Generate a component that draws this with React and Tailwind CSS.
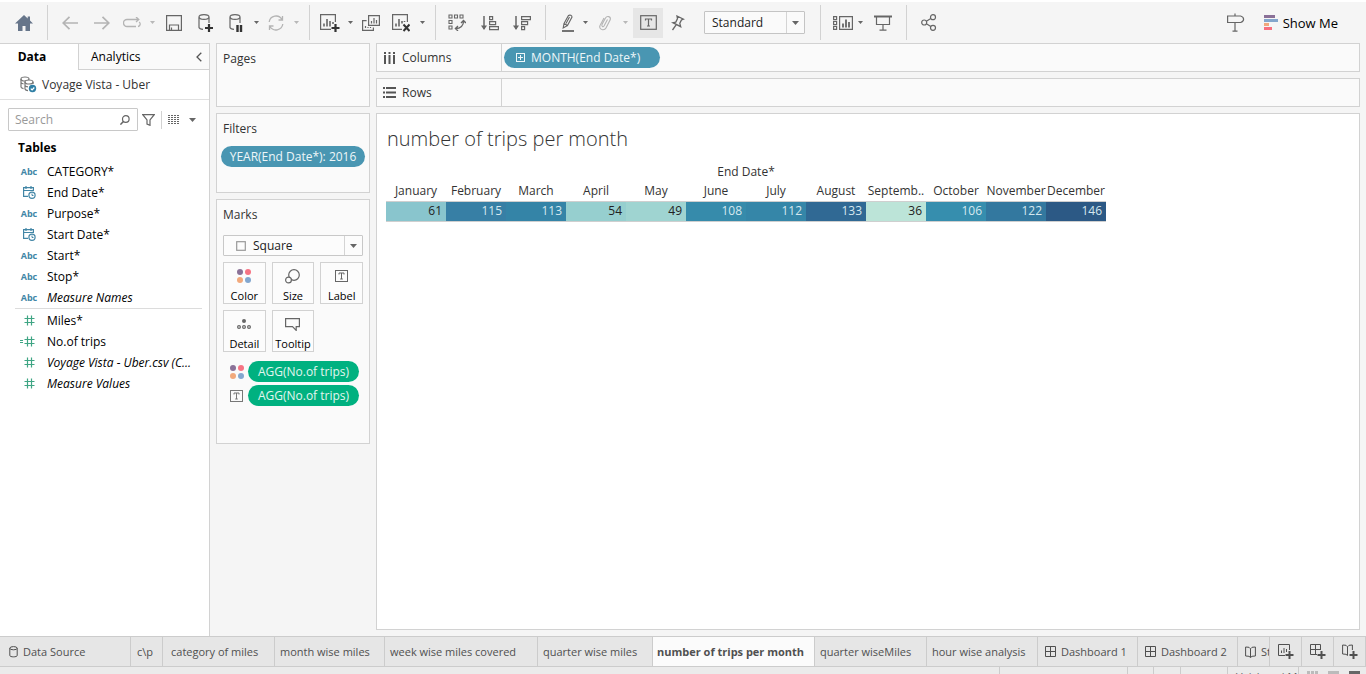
import React from "react";

function Svg({ w, h, className = "", children }) {
  return (
    <svg width={w} height={h} viewBox={`0 0 ${w} ${h}`} fill="none" stroke="currentColor" strokeWidth="1.2" className={"shrink-0 " + className} aria-hidden="true">
      {children}
    </svg>
  );
}

function Tool({ label, className = "w-8", children }) {
  return (
    <button type="button" aria-label={label} className={"flex h-[30px] shrink-0 items-center justify-center text-[#666666] " + className}>
      {children}
    </button>
  );
}

function Caret({ label, light = false }) {
  return (
    <Tool label={label} className={light ? "w-3 text-[#b8b8b8]" : "w-3"}>
      <Svg w={5} h={3}><path d="M0 0h5L2.5 3z" fill="currentColor" stroke="none" /></Svg>
    </Tool>
  );
}

function Sep({ className = "" }) {
  return <div className={"h-[35px] w-px shrink-0 bg-[#d2d2d2] " + className} />;
}

function TextMark({ w = 13, h = 12 }) {
  return (
    <Svg w={w} h={h}>
      <rect x=".5" y=".5" width={w - 1} height={h - 1} strokeWidth="1" />
      <path d={`M${w / 2 - 2.5} ${h / 2 - 1.5}v-1.500h5v1.500M${w / 2} ${h / 2 - 3}v6M${w / 2 - 1.3} ${h / 2 + 3}h2.600`} strokeWidth="1" />
    </Svg>
  );
}

function ColorDots() {
  return (
    <Svg w={14} h={14}>
      <g stroke="none">
        <circle cx="3" cy="3" r="3" fill="#8b7298" />
        <circle cx="11" cy="3" r="3" fill="#f77484" />
        <circle cx="3" cy="11" r="3" fill="#f2a97c" />
        <circle cx="11" cy="11" r="3" fill="#83a7cf" />
      </g>
    </Svg>
  );
}

function Toolbar() {
  return (
    <header className="flex h-[41px] shrink-0 items-center">
      <Tool label="Start page" className="w-[47px]">
        <Svg w={18} h={16}>
          <path d="M9 0L0 8.5h3V16h4.5v-5h3v5H15V8.5h3L15 5.6V1.5h-2.3v2z" fill="#66758a" stroke="none" />
        </Svg>
      </Tool>
      <Sep />
      <Tool label="Undo" className="ml-1.5 w-8 text-[#b4b4b4]">
        <Svg w={16} h={14}><path d="M16 7H1.5M7.5 .8L1.2 7l6.3 6.2" strokeWidth="1.7" /></Svg>
      </Tool>
      <Tool label="Redo" className="w-8 text-[#b4b4b4]">
        <Svg w={16} h={14}><path d="M0 7h14.5M8.5 .8L14.8 7l-6.3 6.2" strokeWidth="1.7" /></Svg>
      </Tool>
      <Tool label="Replay" className="w-7 text-[#b4b4b4]">
        <Svg w={18} h={12}><path d="M13 9.500H4a3.500 3.500 0 010-7h11.500M13 0l2.800 2.500L13 5M15 9.500c3-.5 2.500-4 1-4.500" strokeWidth="1.300" /></Svg>
      </Tool>
      <Caret label="Replay options" light />
      <Tool label="Save">
        <Svg w={16} h={16}><path d="M.6 .6h14.800v14.800H.6zM3.500 15.400V10h9v5.400M5.500 15v-2.500" /></Svg>
      </Tool>
      <Tool label="New data source">
        <Svg w={16} h={18}>
          <path d="M1 3.500v10c.3 1 2 1.700 4 1.900M11 3.500V9" />
          <ellipse cx="6" cy="3" rx="5" ry="2.400" />
          <path d="M11 10v8M7 14h8" stroke="#333" strokeWidth="2.200" />
        </Svg>
      </Tool>
      <Tool label="Pause auto updates" className="w-7">
        <Svg w={14} h={18}>
          <path d="M1 3.500v10c.3 1 2 1.700 4 1.900M11 3.500V9" />
          <ellipse cx="6" cy="3" rx="5" ry="2.400" />
          <path d="M8.500 11v7M12 11v7" stroke="#333" strokeWidth="2.400" />
        </Svg>
      </Tool>
      <Caret label="Update options" />
      <Tool label="Run update" className="w-7 text-[#b4b4b4]">
        <Svg w={18} h={16}>
          <path d="M2.200 7A6.900 6.900 0 0115 4.500M15.800 9A6.900 6.900 0 013 11.500M15.500 1v4h-4M2.500 15v-4h4" strokeWidth="1.300" />
        </Svg>
      </Tool>
      <Caret label="Run options" light />
      <Sep className="ml-[7px]" />
      <Tool label="New worksheet" className="ml-1.5 w-7">
        <Svg w={20} h={18}>
          <path d="M15.400 8V.6H.6v14.800H11" />
          <path d="M4 12.500V9.500M7 12.500V5M10 12.500V7M13 10V8" strokeWidth="1.600" />
          <path d="M15.500 10v8M11.500 14h8" stroke="#333" strokeWidth="2.200" />
        </Svg>
      </Tool>
      <Caret label="New sheet options" />
      <Tool label="Duplicate" className="w-[30px]">
        <Svg w={18} h={16}>
          <path d="M6.600 .6h10.800v9.800H6.600zM4.600 5.600h-4v9.800h10.800v-3M9.500 8.500V6M12 8.500V3M14.500 8.500V5M3.500 13v-2M6 13v-1M8.500 13v-1" />
        </Svg>
      </Tool>
      <Tool label="Clear sheet" className="w-[30px]">
        <Svg w={18} h={18}>
          <path d="M15.400 8V.6H.6v14.800H10" />
          <path d="M4 12.500V9.500M7 12.500V5M10 9.500V7M12.500 8V7" strokeWidth="1.600" />
          <path d="M11.500 10.500l6 6.500M17.500 10.500l-6 6.500" stroke="#333" strokeWidth="2" />
        </Svg>
      </Tool>
      <Caret label="Clear options" />
      <Sep className="ml-[7px]" />
      <Tool label="Swap rows and columns" className="ml-[5px] w-8">
        <Svg w={18} h={17}>
          <path d="M1 1h3v3H1zM6.500 1h3v3h-3zM12 1h3v3h-3zM1 6.500h3v3H1zM1 12h3v3H1z" strokeWidth="1.100" />
          <path d="M15.500 7c.3 4.500-3 7.500-8 7.500M13 9l2.500-2.500L18 9M10 12l-2.600 2.500L10 17" strokeWidth="1.300" />
        </Svg>
      </Tool>
      <Tool label="Sort ascending" className="w-[33px]">
        <Svg w={18} h={16}>
          <path d="M3 1v13" strokeWidth="1.500" /><path d="M0 10.500h6L3 15z" fill="currentColor" stroke="none" />
          <path d="M8.600 1.600h3v3h-3zM8.600 6.600h6v3h-6zM8.600 11.600h8.800v3H8.600z" />
        </Svg>
      </Tool>
      <Tool label="Sort descending">
        <Svg w={18} h={16}>
          <path d="M3 1v13" strokeWidth="1.500" /><path d="M0 10.500h6L3 15z" fill="currentColor" stroke="none" />
          <path d="M8.600 1.600h8.800v3H8.600zM8.600 6.600h6v3h-6zM8.600 11.600h3v3h-3z" />
        </Svg>
      </Tool>
      <Sep className="ml-[7px]" />
      <Tool label="Highlight" className="ml-[11px] w-[22px]">
        <Svg w={14} h={18}>
          <path d="M3 9.500L7.500 1.500c1.500-1 3.500 0 3.500 1.500L6.500 11.500zM3 9.500l-.8 4.500L6.500 11.500M5 9.500l3.500-6.500" strokeWidth="1.100" />
          <path d="M1 17h12" strokeWidth="1.800" />
        </Svg>
      </Tool>
      <Caret label="Highlight options" />
      <Tool label="Group members" className="w-7 text-[#b4b4b4]">
        <Svg w={14} h={16}>
          <path d="M4 9.500L7.500 3c1.500-2.600 5.500-1.600 4.800 1.600L8 13c-1.500 2.800-6 2-6.300-.8-.2-1.500.8-2.700 1.800-4.500L6 3M6 11l3.500-6.500M4 9.500c-.6 2 1 3 2 1.500" strokeWidth="1.100" />
        </Svg>
      </Tool>
      <Caret label="Group options" light />
      <Tool label="Show mark labels" className="ml-0.5 w-[30px] bg-[#e6e6e6] text-[#333333]">
        <Svg w={17} h={15}>
          <rect x=".7" y=".7" width="15.600" height="13.600" />
          <path d="M5.500 5.500V4h6v1.500M8.500 4v7M7 11h3" />
        </Svg>
      </Tool>
      <Tool label="Fix axes" className="w-[30px]">
        <Svg w={14} h={16}>
          <path d="M6 1l6.500 3.200-2 .7-1.700 3.400.9 3.400-7.900-4 3-.6 1.700-3.500zM5.300 9.700L1.500 15" strokeWidth="1.300" />
        </Svg>
      </Tool>
      <div className="relative ml-[11px] h-[23px] w-[101px] shrink-0">
        <select aria-label="Fit" className="h-full w-full appearance-none rounded-[1px] border border-[#c4c4c4] bg-[#fafafa] pl-[7px] text-[12px] text-[#222222]">
          <option>Standard</option>
        </select>
        <div className="pointer-events-none absolute inset-y-px right-px flex w-[18px] items-center justify-center border-l border-[#d4d4d4] text-[#666666]">
          <Svg w={7} h={4}><path d="M0 0h7L3.500 4z" fill="currentColor" stroke="none" /></Svg>
        </div>
      </div>
      <Sep className="ml-[15px]" />
      <Tool label="Show cards" className="ml-[11px] w-[22px]">
        <Svg w={20} h={14}>
          <path d="M.6 .6h3v3h-3zM.6 5.500h3v3h-3zM.6 10.400h3v3h-3zM6.600 .6h12.800v12.800H6.600z" />
          <path d="M10 11.500V7.500M13 11.500V3.500M16 11.500V6" strokeWidth="1.800" />
        </Svg>
      </Tool>
      <Caret label="Card options" />
      <Tool label="Presentation mode" className="w-[34px]">
        <Svg w={18} h={16}><path d="M0 1.500h18" strokeWidth="2" /><path d="M2.500 2v7.500h13V2M9 9.500V15M5.500 15.200h7" /></Svg>
      </Tool>
      <Sep className="ml-1.5" />
      <Tool label="Share" className="ml-[7px] w-[30px] text-[#555555]">
        <Svg w={16} h={17}>
          <circle cx="3.200" cy="8.500" r="2.500" /><circle cx="12" cy="3.200" r="2.500" /><circle cx="12" cy="13.800" r="2.500" />
          <path d="M5.400 7.300l4.400-2.700M5.400 9.700l4.400 2.700" />
        </Svg>
      </Tool>
      <Tool label="Guide" className="ml-auto w-8">
        <Svg w={19} h={19}>
          <path d="M9 .5V3M1.600 3h13c2 .6 3 2 3 3.300 0 1.400-1 2.600-3 3.200h-13zM9 9.500v8.500M6.500 18.200h5" />
        </Svg>
      </Tool>
      <button type="button" className="mr-7 ml-3 flex h-[30px] shrink-0 items-center gap-[5px] text-[13px] text-black">
        <Svg w={14} h={15}>
          <g stroke="none">
            <path d="M0 0h11v3H0z" fill="#8a7097" /><path d="M0 4h14v3H0z" fill="#84a6cc" />
            <path d="M0 8h5v3H0z" fill="#f0a77c" /><path d="M0 12h8v3H0z" fill="#f76f7e" />
          </g>
        </Svg>
        Show Me
      </button>
    </header>
  );
}

const fields = [
  ["abc", "CATEGORY*"],
  ["date", "End Date*"],
  ["abc", "Purpose*"],
  ["date", "Start Date*"],
  ["abc", "Start*"],
  ["abc", "Stop*"],
  ["abc", "Measure Names", true],
];
const measures = [
  ["num", "Miles*"],
  ["calc", "No.of trips"],
  ["num", "Voyage Vista - Uber.csv (C...", true],
  ["num", "Measure Values", true],
];

function FieldIcon({ type }) {
  if (type === "abc") return <span className="text-[9px] font-bold text-[#4286a6]">Abc</span>;
  if (type === "date")
    return (
      <Svg w={14} h={13} className="text-[#4286a6]">
        <path d="M6 10.400H1.600v-8.800h9.800V5M1.600 4.500h9.800M4 0v3M9 0v3" />
        <circle cx="10" cy="9.300" r="3.100" /><path d="M10 7.500v2h1.500" strokeWidth="1" />
      </Svg>
    );
  return (
    <Svg w={18} h={11} className="text-[#3fa584]">
      <path d="M7.500 .5v10M11.500 .5v10M4.500 3.500h10M4.500 7.500h10" />
      {type === "calc" && <path d="M0 4.500h3M0 6.500h3" strokeWidth="1" />}
    </Svg>
  );
}

function FieldList({ items }) {
  return (
    <ul>
      {items.map(([type, name, italic]) => (
        <li key={name} className="flex h-[21px] items-center">
          <span className="flex w-6 shrink-0 justify-center"><FieldIcon type={type} /></span>
          <span className={"ml-[6px] whitespace-nowrap " + (italic ? "italic" : "")}>{name}</span>
        </li>
      ))}
    </ul>
  );
}

function Sidebar() {
  return (
    <aside className="flex w-[210px] shrink-0 flex-col border-t border-r border-[#d2d2d2] bg-white text-black">
      <div className="flex h-[26px]">
        <button type="button" className="w-[78px] pr-3.5 font-bold">Data</button>
        <div className="flex flex-1 items-center justify-between border-b border-l border-[#d2d2d2] bg-[#fafafa] pr-[7px] pl-3">
          <button type="button">Analytics</button>
          <button type="button" aria-label="Collapse pane" className="text-[#555555]">
            <Svg w={6} h={10}><path d="M5.300 .7L1 5l4.300 4.300" strokeWidth="1.300" /></Svg>
          </button>
        </div>
      </div>
      <button type="button" className="flex h-[30px] shrink-0 items-center gap-[5px] border-b border-[#e0e0e0] pl-5 text-[#333333]">
        <Svg w={17} h={17} className="text-[#777777]">
          <ellipse cx="5" cy="3" rx="4" ry="2" /><path d="M1 3v8c0 .8 1 1.300 2.500 1.600M1 6.500c.4.800 1.300 1.200 2.500 1.400" />
          <ellipse cx="9" cy="6" rx="4" ry="2" fill="white" /><path d="M5 6v7c.3.800 1.300 1.500 3 1.700M13 6v2M5 9.500c.5.900 1.500 1.300 3 1.400" />
          <circle cx="12.500" cy="12.500" r="3.700" fill="#2f7fa5" stroke="none" />
          <path d="M10.800 12.600l1.300 1.300 2.200-2.400" stroke="white" />
        </Svg>
        Voyage Vista - Uber
      </button>
      <div className="mt-2 flex h-[23px] shrink-0 items-center pl-2">
        <label className="flex h-full w-[130px] items-center rounded-[1px] border border-[#c8c8c8] pr-[7px] pl-1.5 text-[#666666]">
          <input type="text" aria-label="Search fields" placeholder="Search" className="min-w-0 flex-1 bg-transparent text-[12px] outline-none placeholder:text-[#999999]" />
          <Svg w={10} h={10}><circle cx="5.800" cy="4" r="3.300" /><path d="M3.400 6.400L.4 9.600" strokeWidth="1.500" /></Svg>
        </label>
        <button type="button" aria-label="Filter fields" className="ml-1 text-[#666666]">
          <Svg w={13} h={12}><path d="M.8 .7h11.400L8 6v5.300L5 10V6z" /></Svg>
        </button>
        <div className="ml-[6px] h-[18px] w-px bg-[#d2d2d2]" />
        <button type="button" aria-label="View options" className="ml-[6px] flex items-center gap-[9px] text-[#666666]">
          <Svg w={12} h={9}><path d="M0 .5h12M0 2.500h12M0 4.500h12M0 6.500h12M0 8.500h12" strokeWidth="1" strokeDasharray="2 1" /></Svg>
          <Svg w={7} h={4}><path d="M0 0h7L3.500 4z" fill="currentColor" stroke="none" /></Svg>
        </button>
      </div>
      <h2 className="mt-2 mb-1 pl-[18px] font-bold">Tables</h2>
      <div className="pr-[7px] pl-[17px]">
        <FieldList items={fields} />
        <div className="-ml-0.5 mb-px h-px bg-[#dcdcdc]" />
        <FieldList items={measures} />
      </div>
    </aside>
  );
}

function Card({ title, className = "", children }) {
  return (
    <section className={"border border-[#d2d2d2] bg-[#fafafa] px-[6px] pt-[6px] text-[#333333] " + className}>
      <h3 className="leading-[18px]">{title}</h3>
      {children}
    </section>
  );
}

function MarkButton({ label, children }) {
  return (
    <button type="button" className="flex h-[42px] flex-col items-center justify-between border border-[#d2d2d2] bg-[#fcfcfc] pt-[6px] text-[11px] text-black">
      <span className="flex h-[14px] items-center text-[#666666]">{children}</span>
      <span className="leading-[14px]">{label}</span>
    </button>
  );
}

function Cards() {
  return (
    <div className="flex w-[154px] shrink-0 flex-col gap-[6px]">
      <Card title="Pages" className="h-16" />
      <Card title="Filters" className="h-20">
        <button type="button" className="-mx-0.5 mt-2 h-[21px] w-36 rounded-full bg-[#4996b2] text-[12px] whitespace-nowrap text-[#eef6f9]">YEAR(End Date*): 2016</button>
      </Card>
      <Card title="Marks" className="h-[245px]">
        <div className="relative mt-[11px] h-[21px]">
          <select aria-label="Mark type" className="h-full w-full appearance-none rounded-[1px] border border-[#c8c8c8] bg-[#fcfcfc] pl-[29px] text-[12px] text-[#222222]">
            <option>Square</option>
          </select>
          <div className="pointer-events-none absolute inset-y-0 left-[13px] flex items-center text-[#999999]">
            <Svg w={10} h={10}><rect x=".7" y=".7" width="8.600" height="8.600" /></Svg>
          </div>
          <div className="pointer-events-none absolute inset-y-px right-px flex w-[18px] items-center justify-center border-l border-[#d4d4d4] text-[#666666]">
            <Svg w={7} h={4}><path d="M0 0h7L3.500 4z" fill="currentColor" stroke="none" /></Svg>
          </div>
        </div>
        <div className="mt-[6px] grid grid-cols-3 gap-[6px]">
          <MarkButton label="Color"><ColorDots /></MarkButton>
          <MarkButton label="Size">
            <Svg w={15} h={15}><circle cx="9" cy="6" r="5.300" /><circle cx="3.500" cy="11" r="2.900" fill="#fcfcfc" /></Svg>
          </MarkButton>
          <MarkButton label="Label"><TextMark /></MarkButton>
          <MarkButton label="Detail">
            <Svg w={14} h={10}>
              <circle cx="7" cy="2" r="2" fill="currentColor" stroke="none" />
              <circle cx="2" cy="8" r="1.400" /><circle cx="7" cy="8" r="1.400" /><circle cx="12" cy="8" r="1.400" />
            </Svg>
          </MarkButton>
          <MarkButton label="Tooltip">
            <Svg w={15} h={13}><path d="M.6 .6h13.800v8h-3.200v3.800L7.500 8.600H.6z" /></Svg>
          </MarkButton>
        </div>
        <div className="mt-[9px] flex flex-col gap-[3px]">
          {[<ColorDots key="c" />, <TextMark key="t" />].map((icon) => (
            <div key={icon.key} className="flex h-[21px] items-center pl-[7px] text-[#777777]">
              <span className="flex w-[18px]">{icon}</span>
              <button type="button" className="h-full w-[111px] rounded-full bg-[#00b180] text-[12px] whitespace-nowrap text-[#e2f6ef]">AGG(No.of trips)</button>
            </div>
          ))}
        </div>
      </Card>
    </div>
  );
}

function Shelf({ label, icon, children }) {
  return (
    <div className="flex h-[29px] shrink-0 border border-[#d2d2d2] bg-[#fafafa] text-[#333333]">
      <div className="flex w-[125px] shrink-0 items-center gap-[6px] border-r border-[#d2d2d2] pl-[6px]">{icon}{label}</div>
      <div className="flex flex-1 items-center pl-0.5">{children}</div>
    </div>
  );
}

const months = [
  ["January", 61, "bg-[#89c5cd] text-[#222222]"],
  ["February", 115, "bg-[#377fa5] text-[#d5e8ef]"],
  ["March", 113, "bg-[#3484a7] text-[#d5e8ef]"],
  ["April", 54, "bg-[#96cfcf] text-[#222222]"],
  ["May", 49, "bg-[#9fd4d1] text-[#222222]"],
  ["June", 108, "bg-[#368bab] text-[#d5e8ef]"],
  ["July", 112, "bg-[#3586a8] text-[#d5e8ef]"],
  ["August", 133, "bg-[#306994] text-[#d5e8ef]"],
  ["Septemb..", 36, "bg-[#bce4d8] text-[#222222]"],
  ["October", 106, "bg-[#368eae] text-[#d5e8ef]"],
  ["November", 122, "bg-[#33789f] text-[#d5e8ef]"],
  ["December", 146, "bg-[#2c5985] text-[#d5e8ef]"],
];

function Sheet() {
  return (
    <main className="flex min-w-0 flex-1 flex-col gap-[6px]">
      <Shelf label="Columns" icon={<Svg w={13} h={12} className="text-[#555555]"><path d="M2 0v2M6.500 0v2M11 0v2M2 3v9M6.500 3v9M11 3v9" strokeWidth="2" /></Svg>}>
        <button type="button" className="flex h-[21px] w-[156px] items-center gap-[6px] rounded-full bg-[#4996b2] pl-3 text-[12px] whitespace-nowrap text-[#eef6f9]">
          <Svg w={9} h={9}><rect x=".5" y=".5" width="8" height="8" strokeWidth="1" /><path d="M4.500 2v5M2 4.500h5" strokeWidth="1" /></Svg>
          MONTH(End Date*)
        </button>
      </Shelf>
      <Shelf label="Rows" icon={<Svg w={13} h={11} className="text-[#555555]"><path d="M0 1h2M0 5.500h2M0 10h2M3 1h10M3 5.500h10M3 10h10" strokeWidth="1.800" /></Svg>} />
      <section className="min-h-0 flex-1 border border-[#d2d2d2] bg-white px-[9px] pt-[11px] text-[#333333]">
        <h1 className="mb-[9px] pl-px text-[20px] leading-[28px] font-light">number of trips per month</h1>
        <table className="w-[720px] table-fixed border-collapse">
          <thead>
            <tr><th colSpan={12} className="h-5 p-0 text-center leading-[16px] font-normal">End Date*</th></tr>
            <tr>
              {months.map(([m]) => (
                <th key={m} scope="col" className="h-[19px] p-0 text-center leading-[16px] font-normal whitespace-nowrap">{m}</th>
              ))}
            </tr>
          </thead>
          <tbody>
            <tr className="border-y border-[#cfcfcf]">
              {months.map(([m, v, c]) => (
                <td key={m} className={"h-5 p-0 pr-1 text-right leading-[18px] " + c}>{v}</td>
              ))}
            </tr>
          </tbody>
        </table>
      </section>
    </main>
  );
}

function GridIcon() {
  return <Svg w={11} h={11}><path d="M.5 .5h10v10H.5zM5.500 .5v10M.5 5.500h10" strokeWidth="1" /></Svg>;
}
function StoryIcon() {
  return <Svg w={11} h={12}><path d="M.6 1l3.400.3 1.500 1.500L7 1.300l3.400-.3v9L7 10.300l-1.500 1.200L4 10.300.6 10zM5.500 2.800v8.500" strokeWidth="1" /></Svg>;
}

const sheets = [
  ["Data Source", "w-[131px] pl-[9px]", <Svg key="d" w={9} h={12}><ellipse cx="4.500" cy="2.200" rx="3.700" ry="1.600" strokeWidth="1" /><path d="M.8 2.200v7.300c0 1.800 7.400 1.800 7.400 0V2.200" strokeWidth="1" /></Svg>],
  ["c\\p", "w-8 pl-1.5"],
  ["category of miles", "w-28 pl-2"],
  ["month wise miles", "w-[110px] pl-[5px]"],
  ["week wise miles covered", "w-[153px] pl-[5px]"],
  ["quarter wise miles", "w-[115px] pl-[5px]"],
  ["number of trips per month", "w-[162px] pl-1"],
  ["quarter wiseMiles", "w-28 pl-[5px]"],
  ["hour wise analysis", "w-[111px] pl-[5px]"],
  ["Dashboard 1", "w-[100px] pl-[7px]", <GridIcon key="g" />],
  ["Dashboard 2", "w-[100px] pl-[7px]", <GridIcon key="g" />],
  ["Story 1", "w-8 pl-[7px]", <StoryIcon key="s" />],
];

function SheetTabs() {
  return (
    <nav className="flex h-[31px] shrink-0 overflow-hidden border-y border-[#cccccc] bg-[#e6e6e6] text-[11px] text-[#505050]">
      {sheets.map(([name, cls, icon], i) => (
        <button
          key={name}
          type="button"
          className={"flex shrink-0 items-center gap-[5px] overflow-hidden border-r border-[#cccccc] whitespace-nowrap " + cls + (i === 6 ? " bg-[#fbfbfb] font-bold" : "")}
        >
          {icon}{name}
        </button>
      ))}
      <button type="button" aria-label="New worksheet tab" className="flex w-8 shrink-0 items-center justify-center border-r border-[#cccccc]">
        <Svg w={16} h={15}><path d="M11.500 6V.5H.5v11H7M3.500 9V6.500M6 9V4M8.500 8V5" strokeWidth="1" /><path d="M11.500 7v8M7.500 11h8" strokeWidth="2" /></Svg>
      </button>
      <button type="button" aria-label="New dashboard" className="flex w-8 shrink-0 items-center justify-center border-r border-[#cccccc]">
        <Svg w={16} h={15}><path d="M10.500 6V.5H.5v10H7M5.500 .5v10M.5 5.500h10" strokeWidth="1" /><path d="M11.500 7v8M7.500 11h8" strokeWidth="2" /></Svg>
      </button>
      <button type="button" aria-label="New story" className="flex w-8 shrink-0 items-center justify-center border-r border-[#cccccc]">
        <Svg w={16} h={15}><path d="M10.400 6V1L7 1.300 5.500 2.800 4 1.300.6 1v9l3.400.3 1.500 1.200V2.800" strokeWidth="1" /><path d="M11.500 7v8M7.500 11h8" strokeWidth="2" /></Svg>
      </button>
    </nav>
  );
}

function StatusBar() {
  return (
    <footer className="flex h-[7px] shrink-0 justify-end overflow-hidden bg-[#ebebeb] text-[11px] text-[#666666]">
      <div className="w-32 border-l border-[#cccccc]" />
      <div className="w-[26px] border-l border-[#cccccc]" />
      <div className="w-[27px] border-l border-[#cccccc]" />
      <div className="w-[47px] border-l border-[#cccccc]" />
      <div className="w-[71px] border-l border-[#cccccc] pt-[2px] pl-2 leading-[15px] whitespace-nowrap">Vaishnavi M</div>
      <div className="flex w-[68px] gap-[10px] border-l border-[#cccccc] pt-1 pl-2">
        <Svg w={11} h={3}><path d="M0 1.500h3M4 1.500h3M8 1.500h3" stroke="#bbbbbb" strokeWidth="3" /></Svg>
        <Svg w={11} h={3}><path d="M0 1.500h11" stroke="#bbbbbb" strokeWidth="3" /></Svg>
        <Svg w={11} h={3}><path d="M0 1.500h11" stroke="#666666" strokeWidth="3" /></Svg>
      </div>
    </footer>
  );
}

export default function App() {
  return (
    <div className="flex h-screen flex-col overflow-hidden border-t-2 border-white bg-[#f5f5f5] font-['Open_Sans','Noto_Sans',sans-serif] text-[12px] leading-[18px]">
      <Toolbar />
      <div className="flex min-h-0 flex-1">
        <Sidebar />
        <div className="flex min-w-0 flex-1 gap-[6px] pr-[6px] pb-[6px] pl-[6px]">
          <Cards />
          <Sheet />
        </div>
      </div>
      <SheetTabs />
      <StatusBar />
    </div>
  );
}
